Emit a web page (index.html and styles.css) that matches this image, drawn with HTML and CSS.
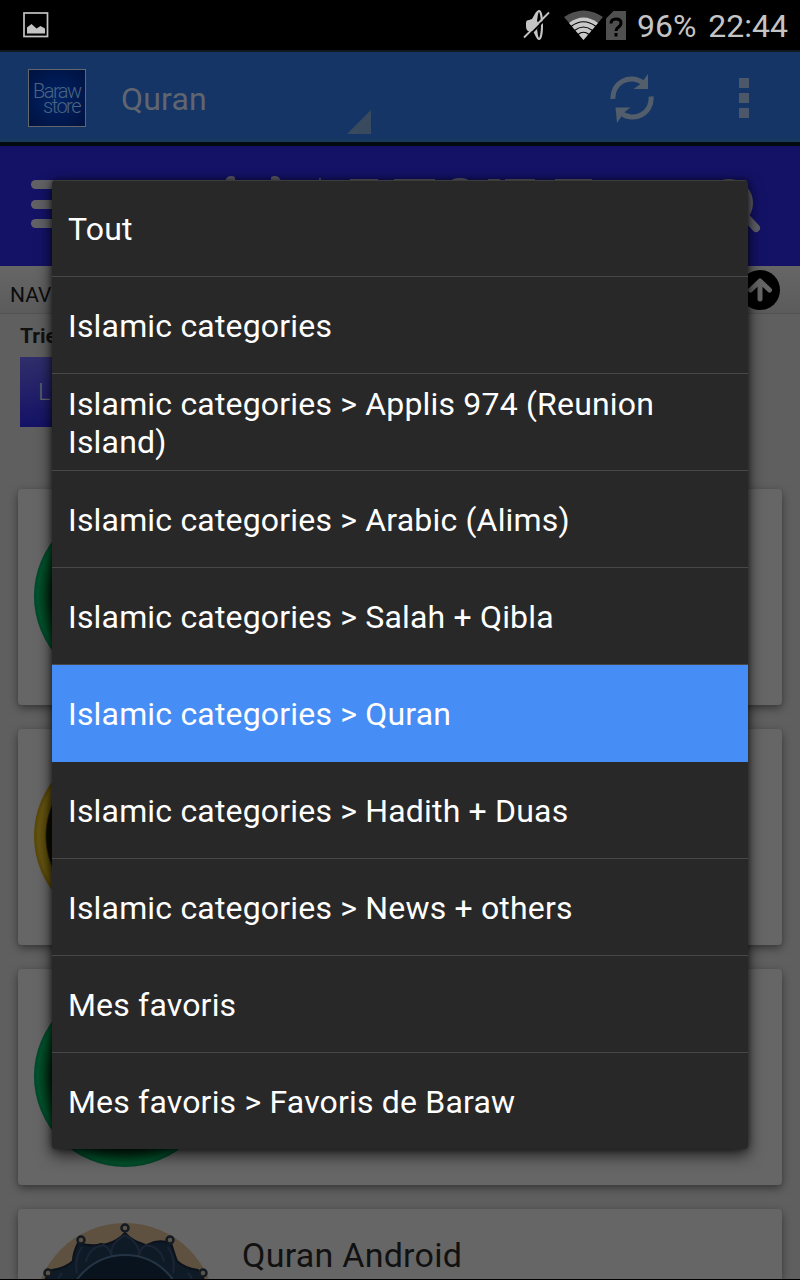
FILE: index.html
```html
<!DOCTYPE html>
<html lang="fr">
<head>
  <meta charset="UTF-8">
  <meta name="viewport" content="width=device-width, initial-scale=1.0">
  <title>Baraw store</title>
  <link rel="stylesheet" href="styles.css">
</head>
<body>

  <div class="status-bar">
    <svg class="status-picture" width="26" height="26" viewBox="0 0 26 26">
      <rect x="1" y="1" width="23.5" height="23.5" fill="none" stroke="#c4c4c4" stroke-width="1.7"/>
      <path d="M4 21.500V15.500l4.500-3.500 5 4.500 4-2.500 4.500 2.500v5z" fill="#c4c4c4"/>
    </svg>
    <div class="status-right">
      <svg width="27" height="32" viewBox="0 0 27 32">
        <path d="M3 14q0-3 3-3l3-1 4-7 4-2q-3 15 0 29l-4-2-3-6H5q-2-1-2-5z" fill="#c4c4c4"/>
        <ellipse cx="16" cy="16" rx="3" ry="14" fill="#000" stroke="#c4c4c4" stroke-width="2"/>
        <path d="M12 12q4 0 4 4t-4 4z" fill="#c4c4c4"/>
        <path d="M2.500 30L27.500 5" stroke="#000" stroke-width="2"/>
        <path d="M1 28.500L26 3.500" stroke="#c4c4c4" stroke-width="1.800"/>
      </svg>
      <svg class="wifi" width="40" height="30" viewBox="0 0 40 30">
        <path d="M0 7Q19.500-6 39 7L19.500 30z" fill="#505050"/>
        <path d="M5 13Q19.500 2 34 13L19.500 30z" fill="#c8c8c8"/>
        <path d="M7 16.500Q19.500 7 32 16.500M10.500 20.500Q19.500 13.500 28.500 20.500M14 24.500Q19.500 20 25 24.500" fill="none" stroke="#000" stroke-width="1.200"/>
      </svg>
      <svg class="sim" width="20" height="29" viewBox="0 0 20 29">
        <path d="M7.500 0H20v29H0V7.500z" fill="#505050"/>
        <path d="M5 12.500q0-4.500 5-4.500t5 4q0 2.500-3 4.500-2 1.500-2 3.500M10 22v3.500" fill="none" stroke="#000" stroke-width="3"/>
      </svg>
      <span class="battery">96%</span>
      <span class="clock">22:44</span>
    </div>
  </div>

  <div class="action-bar">
    <div class="logo"><span>Baraw</span><span class="logo-store">store</span></div>
    <div class="spinner">
      <span>Quran</span>
      <svg width="24" height="24" viewBox="0 0 24 24"><path d="M24 0v24H0z" fill="#3a4a5e"/></svg>
    </div>
    <svg class="refresh" width="44" height="49" viewBox="0 0 44 49">
      <g fill="none" stroke="#525e6b" stroke-width="5">
        <path d="M3 25A18.500 18.500 0 0 1 33 9"/>
        <path d="M41 22.500A18.500 18.500 0 0 1 11 39"/>
      </g>
      <path d="M38 0v15H23.500l7-5z" fill="#525e6b"/>
      <path d="M5.500 33.500H20.500l-6.500 5L7 49z" fill="#525e6b"/>
    </svg>
    <div class="overflow"><i></i><i></i><i></i></div>
  </div>

  <div class="site-header">
    <div class="burger"><i></i><i></i><i></i></div>
    <svg class="site-logo" width="370" height="8" viewBox="0 0 370 8" fill="#5c5c66">
      <path d="M0 6q1-6 6-6 4 0 4 2v4zM46 6V2q0-2 4-2 5 0 6 6zM93 6l2-5 2 5z"/>
      <path d="M125 3h28v3h-28zM169 3h41v3h-41zM226 6q0-4 9-4t9 4zM263 3h12v3h-12zM280 3h30v3h-30zM330 3h37v3h-37z"/>
    </svg>
    <svg class="search" width="60" height="58" viewBox="0 0 60 58">
      <circle cx="28" cy="25" r="21" fill="none" stroke="#606068" stroke-width="6"/>
      <path d="M41 35L55 50" stroke="#606068" stroke-width="8" stroke-linecap="round"/>
    </svg>
  </div>

  <div class="nav-bar">
    <span>NAV</span>
    <svg width="40" height="40" viewBox="0 0 40 40">
      <circle cx="20" cy="20" r="20" fill="#000"/>
      <path d="M20 29V12M10.500 20L20 11l9.500 9" fill="none" stroke="#666" stroke-width="5" stroke-linecap="round" stroke-linejoin="round"/>
    </svg>
  </div>

  <div class="sort">
    <p>Trie</p>
    <button>L</button>
  </div>

  <div class="cards">
    <div class="card"><div class="app-icon green"></div></div>
    <div class="card"><div class="app-icon gold"></div></div>
    <div class="card"><div class="app-icon green"></div></div>
    <div class="card card-cut">
      <svg class="rosette" width="182" height="56" viewBox="0 0 182 56">
        <circle cx="91" cy="91" r="91" fill="#5e5140"/>
        <path d="M91 10q7 8 18 11 3 2 6 0 9-5 22-1 4 13 6 18 7 7 21 9 8 10 12 30v80H6V77q2-20 12-30 14-2 21-9 0-8 5-18 16 4 23 1 3 1 6 0 11-3 18-11z" fill="#0f1a27" stroke="#0b121b" stroke-width="2"/>
        <g fill="none" stroke="#1b2434" stroke-width="2">
          <path d="M91 12q-17 10-13 22M91 12q17 10 13 22M52 39q3-15 18-17 10 7 6 15M130 39q-3-15-18-17-10 7-6 15"/>
          <path d="M48 24q-8 12-5 26M134 24q8 12 5 26M28 50q-7 8-5 16M154 50q7 8 5 16"/>
        </g>
        <circle cx="91" cy="91" r="59" fill="#08131d" stroke="#253444" stroke-width="2"/>
        <g fill="#5a5348" stroke="#141a22" stroke-width="2.500">
          <circle cx="91" cy="5" r="3.500"/>
          <circle cx="47" cy="17" r="3.500"/>
          <circle cx="136" cy="17" r="3.500"/>
          <circle cx="14" cy="50" r="3.500"/>
          <circle cx="169" cy="50" r="3.500"/>
        </g>
      </svg>
      <span class="app-name">Quran Android</span>
    </div>
  </div>

  <ul class="dropdown">
    <li>Tout</li>
    <li>Islamic categories</li>
    <li>Islamic categories &gt; Applis 974 (Reunion Island)</li>
    <li>Islamic categories &gt; Arabic (Alims)</li>
    <li>Islamic categories &gt; Salah + Qibla</li>
    <li class="selected">Islamic categories &gt; Quran</li>
    <li>Islamic categories &gt; Hadith + Duas</li>
    <li>Islamic categories &gt; News + others</li>
    <li>Mes favoris</li>
    <li>Mes favoris &gt; Favoris de Baraw</li>
  </ul>

</body>
</html>
```
FILE: styles.css
```css
* {
  box-sizing: border-box;
}

body {
  margin: 0;
  height: 1280px;
  overflow: hidden;
  position: relative;
  display: flex;
  flex-direction: column;
  background: #5f5f5f;
  border-bottom: 1px solid #000;
  font-family: Roboto, sans-serif;
}

svg {
  display: block;
  flex: none;
}

.status-bar {
  height: 52px;
  flex: none;
  display: flex;
  justify-content: space-between;
  background: #000;
  border-bottom: 2px solid #101820;
  padding: 0 12px 0 23px;
}

.status-picture {
  margin-top: 12px;
}

.status-right {
  display: flex;
  padding-top: 9px;
  color: #c4c4c4;
  font-size: 32px;
  line-height: 34px;
}

.wifi {
  margin: 1px 0 0 14px;
}

.sim {
  margin: 2px 11px 0 2px;
}

.clock {
  margin-left: 12px;
}

.action-bar {
  height: 94px;
  flex: none;
  display: flex;
  background: #153566;
  border-bottom: 4px solid #030a10;
  box-shadow: inset 0 -7px 3px -4px #183b5c;
  padding: 0 51px 0 28px;
}

.logo {
  width: 58px;
  height: 58px;
  margin-top: 17px;
  padding: 14px 5px 0 4px;
  display: flex;
  flex-direction: column;
  border: 1px solid #62676c;
  background: radial-gradient(#002266, #00123f);
  color: #4b647f;
  font-size: 20px;
  font-weight: 300;
  line-height: 15px;
  letter-spacing: -1.5px;
}

.logo-store {
  align-self: flex-end;
}

.spinner {
  width: 250px;
  margin-left: 35px;
  display: flex;
  justify-content: space-between;
  color: #60666f;
  font-size: 32px;
  line-height: 94px;
  letter-spacing: 0.2px;
}

.spinner svg {
  margin-top: 58px;
}

.refresh {
  margin: 22px 0 0 239px;
}

.overflow {
  margin: 26px 0 0 auto;
  display: flex;
  flex-direction: column;
  gap: 5px;
}

.overflow i {
  width: 10px;
  height: 10px;
  background: #4c5869;
}

.site-header {
  height: 120px;
  flex: none;
  display: flex;
  background: #141266;
  padding-left: 31px;
}

.burger {
  margin-top: 34px;
  width: 60px;
  display: flex;
  flex-direction: column;
  gap: 10.500px;
}

.burger i {
  height: 9px;
  border-radius: 5px;
  background: #626266;
}

.site-logo {
  margin: 30px 0 0 134px;
}

.search {
  margin: 32px 0 0 106px;
}

.nav-bar {
  height: 48px;
  flex: none;
  display: flex;
  justify-content: space-between;
  padding: 4px 20px 0 10px;
  background: linear-gradient(#666, #5b5b5b);
  border-bottom: 1px solid #535353;
  color: #0c0c0c;
  font-size: 21px;
  line-height: 50px;
}

.sort {
  height: 175px;
  flex: none;
  padding: 8px 20px 0;
}

.sort p {
  margin: 0 0 6px;
  color: #111;
  font-size: 21px;
  font-weight: bold;
  line-height: 29px;
}

.sort button {
  width: 150px;
  height: 70px;
  padding: 0 18px;
  border: 0;
  background: linear-gradient(#312e6b, #141266);
  color: #66666a;
  font: 300 24px Roboto, sans-serif;
  text-align: left;
}

.cards {
  padding: 0 18px;
  display: flex;
  flex-direction: column;
  gap: 24px;
}

.card {
  height: 216px;
  flex: none;
  padding: 16px;
  display: flex;
  border-radius: 4px;
  background: #666;
  box-shadow: 0 3px 8px rgba(0, 0, 0, 0.45);
}

/* last card runs under the bottom edge of the screen */
.card-cut {
  height: 70px;
  padding: 14px 16px 0;
  border-radius: 4px 4px 0 0;
}

.app-icon {
  width: 182px;
  height: 182px;
  border-radius: 50%;
}

.green {
  background: radial-gradient(circle closest-side, #001c0a 78%, #003e1e 88%, #00532c 96%, #00452a);
}

.gold {
  background: radial-gradient(circle closest-side, #0c0b00 86%, #5a4b0b 88%, #655411 95%, #564608);
}

.app-name {
  margin: 12px 0 0 26px;
  color: #111;
  font-size: 34px;
  line-height: 40px;
  letter-spacing: 0.25px;
}

/* list opened from the action bar spinner */
.dropdown {
  position: absolute;
  top: 180px;
  left: 52px;
  width: 696px;
  height: 969px;
  margin: 0;
  padding: 0;
  overflow: hidden;
  list-style: none;
  border-radius: 4px;
  background: #282828;
  box-shadow: 0 6px 16px rgba(0, 0, 0, 0.7), 0 0 6px rgba(0, 0, 0, 0.5);
  color: #fff;
  font-size: 32px;
  line-height: 38px;
  letter-spacing: 0.18px;
}

.dropdown li {
  height: 97px;
  padding: 1px 16px 0;
  display: flex;
  align-items: center;
  border-bottom: 1px solid #484848;
}

.dropdown li:first-child {
  border-top: 1px solid #3c3c3c;
}

.dropdown li:last-child {
  border-bottom: 0;
}

.dropdown .selected {
  background: #468df5;
  border-color: #468df5;
}
```
